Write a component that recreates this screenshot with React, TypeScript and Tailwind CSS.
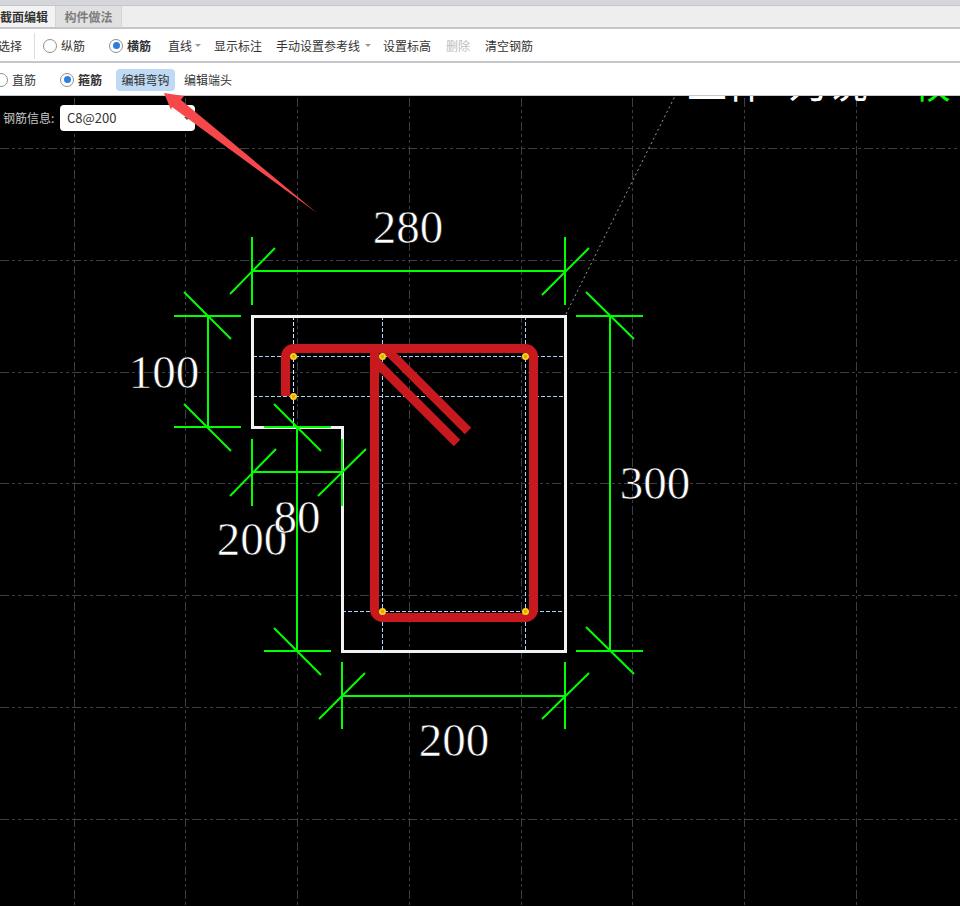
const cjk = '"Noto Sans CJK SC", "Noto Sans", sans-serif';

const gridX = [74, 185, 297, 409, 521, 632, 744, 856];
const gridY = [148, 260, 372, 483, 595, 707, 819];

function Radio({ checked }: { checked?: boolean }) {
  return (
    <span className="flex h-[14px] w-[14px] shrink-0 items-center justify-center rounded-full border border-[#8f8f8f] bg-white">
      {checked && <span className="h-[7px] w-[7px] rounded-full bg-[#2b7de0]" />}
    </span>
  );
}

function Caret({ className }: { className?: string }) {
  return <span className={"h-0 w-0 border-x-[3px] border-t-[3px] border-x-transparent border-t-[#9a9a9a] " + (className ?? "")} />;
}

function Divider() {
  return <span className="h-[26px] w-px shrink-0 bg-[#dcdcdc]" />;
}

function Drawing() {
  const green = "#00ff00";
  const dims = [
    "M252 271H565M252 237V305M565 237V305M230 294L275 248M542 295L589 248",
    "M610 316V651M576 316H643M576 651H643M586 292L634 339M586 627L634 674",
    "M342 696H565M342 662V729M565 662V729M319 719L365 673M542 719L589 673",
    "M208 316V427M174 316H241M174 427H241M184 292L231 339M184 404L231 451",
    "M297 427V651M264 427H331M264 651H331M274 404L321 451M274 628L321 675",
    "M252 472H342M252 439V506M342 439V506M230 496L276 449M318 496L366 449",
  ];
  const points = [
    [293, 356],
    [293, 396],
    [382, 356],
    [525, 356],
    [382, 611],
    [525, 611],
  ];
  return (
    <svg className="absolute inset-0 h-full w-full" viewBox="0 96 960 810">
      {gridX.map((x) => (
        <path key={x} d={`M${x + 0.5} 98V906`} stroke="#3a3f4a" fill="none" strokeDasharray="9 3 3 3 3 3" />
      ))}
      {gridY.map((y) => (
        <path key={y} d={`M0 ${y + 0.5}H960`} stroke="#3a3f4a" fill="none" strokeDasharray="9 3 3 3 3 3" />
      ))}

      <g fontSize="40" fontFamily={cjk}>
        <text x="687" y="98" fill="#fff">工作</text>
        <text x="788" y="98" fill="#fff">为说</text>
        <text x="911" y="98" fill="#00ff00">较</text>
      </g>

      <path d="M566 314L675 96" stroke="#9a9a9a" strokeDasharray="2 3" fill="none" />

      <path d="M253 356.5H565M253 396.5H565M342 611.5H565M382.5 316V651M525.5 316V651" stroke="#a9d0ff" strokeDasharray="4 2" fill="none" />
      <path d="M293.5 316V427" stroke="#dbe9fb" strokeDasharray="4 2" fill="none" />

      <path d="M252.5 316.5H565.5V651.5H342.5V427.5H252.5Z" stroke="#f2f2f2" strokeWidth="3" fill="none" />

      <path
        d="M285.5 396V356.5A8 8 0 0 1 293.5 348.5H525.5A8 8 0 0 1 533.5 356.5V609.5A8 8 0 0 1 525.5 617.5H382.5A8 8 0 0 1 374.5 609.5V348.5M386 349L468 431M374 360L457 443"
        stroke="#c8191f"
        strokeWidth="9"
        fill="none"
      />

      {dims.map((d) => (
        <path key={d} d={d} stroke={green} strokeWidth="2" fill="none" />
      ))}

      {points.map(([x, y]) => (
        <circle key={`${x}-${y}`} cx={x + 0.5} cy={y + 0.5} r="2.6" fill="#e0a800" stroke="#ffd21f" strokeWidth="1.8" />
      ))}

      <g fill="#fff" stroke="#000" strokeWidth="0.6" fontSize="47" fontFamily='"Liberation Serif", serif' textAnchor="middle">
        <text x="408" y="243">280</text>
        <text x="164" y="388">100</text>
        <text x="655" y="499">300</text>
        <text x="454" y="756">200</text>
        <text x="252" y="555">200</text>
        <text x="297" y="533">80</text>
      </g>
    </svg>
  );
}

export default function App() {
  return (
    <div className="relative flex h-[906px] w-full flex-col overflow-hidden bg-black text-xs text-[#333]" style={{ fontFamily: cjk }}>
      <div className="h-[6px] shrink-0 border-b border-[#c5c7cb] bg-[#d5d6db]" />

      <div className="flex h-[23px] shrink-0 border-b-2 border-[#c5c7cc] bg-[#eeeeee]">
        <div className="flex w-[56px] items-center border-r border-[#d4d4d4] bg-[#f3f3f3] font-bold">截面编辑</div>
        <div className="flex w-[66px] items-center justify-center border-r border-[#d4d4d4] bg-[#e0e0e0] font-bold text-[#7d7d7d]">构件做法</div>
      </div>

      <div className="flex h-[34px] shrink-0 items-center border-b-2 border-[#c5c7cc] bg-white pt-px">
        <span className="-ml-[2px] w-[36px]">选择</span>
        <Divider />
        <span className="ml-[8px] flex items-center gap-1">
          <Radio />
          纵筋
        </span>
        <span className="ml-[24px] flex items-center gap-1">
          <Radio checked />
          <b>横筋</b>
        </span>
        <span className="ml-[6px]"><Divider /></span>
        <span className="ml-[11px]">直线</span>
        <Caret className="ml-[3px]" />
        <span className="ml-[13px]">显示标注</span>
        <span className="ml-[14px]">手动设置参考线</span>
        <Caret className="ml-[5px]" />
        <span className="ml-[12px]">设置标高</span>
        <span className="ml-[15px] text-[#bdbdbd]">删除</span>
        <span className="ml-[15px]">清空钢筋</span>
      </div>

      <div className="flex h-[33px] shrink-0 items-center border-b border-[#c5c7cc] bg-white pt-px">
        <span className="-ml-[6px]"><Radio /></span>
        <span className="ml-1">直筋</span>
        <span className="ml-[24px]"><Radio checked /></span>
        <b className="ml-1">箍筋</b>
        <span className="ml-[6px]"><Divider /></span>
        <span className="ml-[8px] flex h-[22px] w-[59px] items-center justify-center rounded bg-[#bfdaf5]">编辑弯钩</span>
        <span className="ml-[9px]">编辑端头</span>
      </div>

      <div className="relative flex-1 overflow-hidden">
        <Drawing />
        <span className="absolute left-[3px] top-[14px] text-[#c9c9c9]">钢筋信息:</span>
        <div className="absolute left-[60px] top-[9px] flex h-[26px] w-[135px] items-center justify-between rounded bg-white pl-[7px] pr-[5px] text-[13px]">
          C8@200
          <Caret className="border-t-[#555]" />
        </div>
      </div>

      {/* annotation arrow sits over the toolbar and the select */}
      <svg className="pointer-events-none absolute left-0 top-0 h-[906px] w-[960px]" viewBox="0 0 960 906">
        <path d="M164 93L184 96L181 100L317 213L172 107L171 110Z" fill="#f6484b" />
      </svg>
    </div>
  );
}
